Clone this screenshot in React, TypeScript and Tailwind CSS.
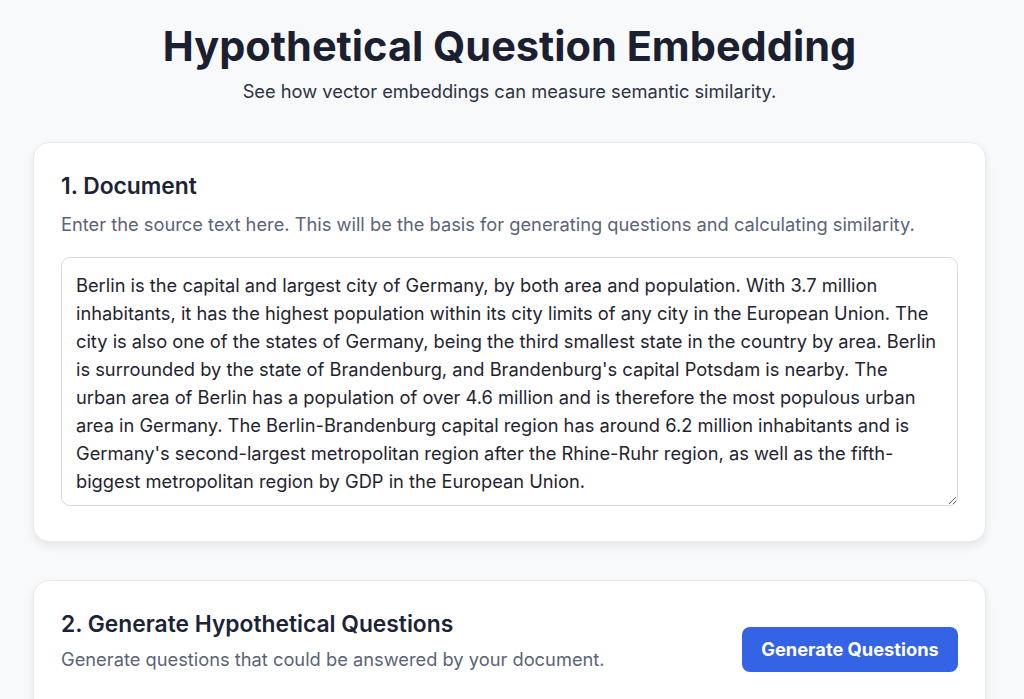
import React, { useState } from "react";

const DOC =
  "Berlin is the capital and largest city of Germany, by both area and population. With 3.7 million inhabitants, it has the highest population within its city limits of any city in the European Union. The city is also one of the states of Germany, being the third smallest state in the country by area. Berlin is surrounded by the state of Brandenburg, and Brandenburg's capital Potsdam is nearby. The urban area of Berlin has a population of over 4.6 million and is therefore the most populous urban area in Germany. The Berlin-Brandenburg capital region has around 6.2 million inhabitants and is Germany's second-largest metropolitan region after the Rhine-Ruhr region, as well as the fifth-biggest metropolitan region by GDP in the European Union.";

export default function App() {
  const [doc, setDoc] = useState(DOC);

  return (
    <div className="min-h-screen bg-[#f8f9fb] font-['Inter',sans-serif] text-[#1a2030]">
      <div className="ml-[33px] w-[953px] pt-[22px] pb-10">
        {/* Header */}
        <header className="text-center">
          <h1 className="text-[41.5px] font-bold leading-[48px] text-[#1b2030]">
            Hypothetical Question Embedding
          </h1>
          <p className="mt-[8px] text-[18.3px] leading-[26px] text-[#2b3344]">
            See how vector embeddings can measure semantic similarity.
          </p>
        </header>

        {/* 1. Document */}
        <section className="mt-[38px] rounded-2xl border border-[#e8eaee] bg-white px-[27px] pt-[27px] pb-[35px] shadow-[0_4px_10px_rgba(0,0,0,0.08)]">
          <h2 className="text-[22.8px] font-semibold leading-[32px] text-[#1b2335]">1. Document</h2>
          <p className="mt-[9px] text-[18.3px] leading-[26px] text-[#5a6478]">
            Enter the source text here. This will be the basis for generating questions and calculating similarity.
          </p>
          <textarea
            value={doc}
            onChange={(e) => setDoc(e.target.value)}
            className="mt-[20px] block h-[249px] w-full resize-y rounded-[9px] border border-[#d6d9df] bg-white px-[14px] pt-[13px] text-[18.3px] leading-[28px] text-[#1f2430] outline-none"
          />
        </section>

        {/* 2. Questions */}
        <section className="mt-[38px] rounded-2xl border border-[#e8eaee] bg-white px-[27px] pt-[27px] pb-[28px] shadow-[0_4px_10px_rgba(0,0,0,0.08)]">
          <div className="flex items-end justify-between">
            <div>
              <h2 className="text-[22.8px] font-semibold leading-[32px] text-[#1b2335]">
                2. Generate Hypothetical Questions
              </h2>
              <p className="mt-[6px] text-[18.3px] leading-[26px] text-[#5a6478]">
                Generate questions that could be answered by your document.
              </p>
            </div>
            <button className="h-[45px] w-[216px] rounded-[8px] bg-[#3563e6] text-[18.3px] font-bold text-white">
              Generate Questions
            </button>
          </div>
          <div className="h-[80px]" />
        </section>
      </div>
    </div>
  );
}
